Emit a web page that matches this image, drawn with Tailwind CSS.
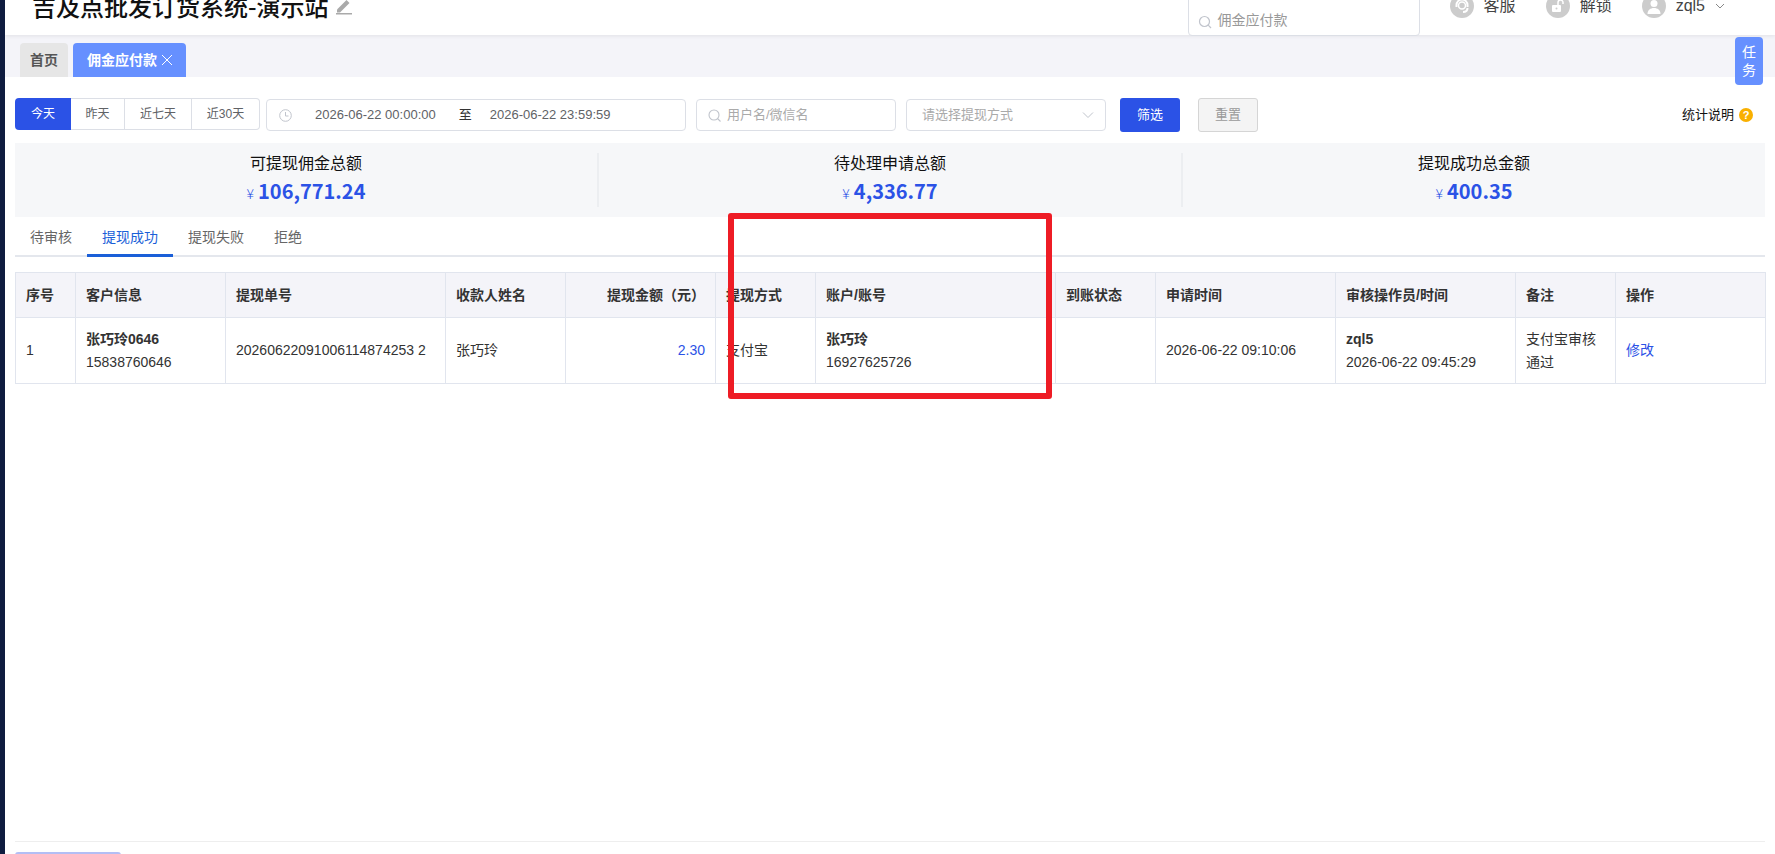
<!DOCTYPE html>
<html lang="zh-CN">
<head>
<meta charset="utf-8">
<title>佣金应付款</title>
<script src="https://cdn.jsdelivr.net/npm/@tailwindcss/browser@4"></script>
</head>
<body class="bg-white">
<div class="relative flex h-[854px] w-[1775px] overflow-hidden bg-white font-['Liberation_Sans','Noto_Sans_CJK_SC',sans-serif] text-[14px] text-[#333]">
  <aside class="w-[5px] shrink-0 bg-[#0f1c3f]"></aside>
  <main class="flex min-w-0 flex-1 flex-col overflow-hidden">
    <header class="relative z-10 -mt-[23px] flex h-[58px] shrink-0 items-center bg-white pl-[27px] pr-[50px] shadow-[0_1px_4px_rgba(0,0,0,0.08)]">
      <h1 class="font-['Noto_Sans_CJK_SC',sans-serif] text-[24px] font-medium whitespace-nowrap text-[#111]">吉及点批发订货系统-演示站</h1>
      <svg class="ml-[6px] h-[18px] w-[18px] self-center" viewBox="0 0 18 18" fill="#aaa"><path d="M2 12.5 11.5 3l3 3L5 15.5H2z"/><rect x="1" y="16" width="16" height="1.5"/></svg>
      <div class="ml-auto flex h-[60px] w-[232px] items-end rounded-[4px] border border-[#dcdfe6] pb-[4px] pl-[9px] text-[14px] text-[#999]">
        <svg class="mr-[6px] mb-[2px] h-[14px] w-[14px]" viewBox="0 0 14 14" fill="none" stroke="#c0c4cc" stroke-width="1.2"><circle cx="6.5" cy="6.5" r="5"/><path d="m10.2 10.2 2.8 2.8"/></svg>
        <span>佣金应付款</span>
      </div>
      <div class="ml-[30px] flex items-center gap-[10px]">
        <span class="flex h-[24px] w-[24px] items-center justify-center rounded-full bg-[#ccc]"><svg class="h-[18px] w-[18px]" viewBox="0 0 18 18" fill="none" stroke="#fff" stroke-width="2"><path d="M3.5 10V8a5.5 5.5 0 0 1 11 0v2"/><path d="M14.500 11c0 2.500-2 4-4.500 4"/><circle cx="9" cy="8.500" r="3.500" stroke-width="1.500"/></svg></span>
        <span class="text-[16px] text-[#444]">客服</span>
      </div>
      <div class="ml-[30px] flex items-center gap-[10px]">
        <span class="flex h-[24px] w-[24px] items-center justify-center rounded-full bg-[#ccc]"><svg class="h-[16px] w-[16px]" viewBox="0 0 16 16"><rect x="2" y="7" width="9" height="7" rx="1" fill="#fff"/><path d="M8 7V4.500a2.500 2.500 0 0 1 5 0V6" fill="none" stroke="#fff" stroke-width="1.500"/><circle cx="6.500" cy="10.500" r="1" fill="#ccc"/></svg></span>
        <span class="text-[16px] text-[#444]">解锁</span>
      </div>
      <div class="ml-[30px] flex items-center gap-[10px]">
        <span class="flex h-[24px] w-[24px] items-center justify-center rounded-full bg-[#ccc]"><svg class="h-[18px] w-[18px]" viewBox="0 0 18 18" fill="#fff"><circle cx="9" cy="6.500" r="3.500"/><path d="M2.500 17c0-4 3-6 6.500-6s6.500 2 6.500 6z"/></svg></span>
        <span class="text-[16px] text-[#444]">zql5</span>
        <svg class="h-[8px] w-[10px]" viewBox="0 0 10 8" fill="none" stroke="#888" stroke-width="1"><path d="m1 2 4 4 4-4"/></svg>
      </div>
    </header>

    <nav class="flex h-[42px] shrink-0 items-end gap-[5px] bg-[#f4f4f9] pl-[15px]">
      <span class="flex h-[34px] w-[48px] items-center justify-center rounded-t-[4px] bg-[#e6e6e6] font-bold text-[#555]">首页</span>
      <span class="flex h-[34px] w-[113px] items-center justify-center gap-[5px] rounded-t-[4px] bg-[#6690ff] font-bold text-white">佣金应付款
        <svg class="h-[10px] w-[10px]" viewBox="0 0 10 10" stroke="#fff" stroke-width="1"><path d="m0 0 10 10M10 0 0 10"/></svg>
      </span>
    </nav>

    <section class="flex min-h-0 flex-1 flex-col px-[10px]">
      <div class="mt-[21px] flex h-[34px] items-start text-[13px]">
        <div class="flex h-[32px] text-[12px] text-[#606266]">
          <span class="flex w-[56px] items-center justify-center rounded-l-[4px] bg-[#2b52e6] text-white">今天</span>
          <span class="flex w-[54px] items-center justify-center border-y border-r border-[#dcdfe6]">昨天</span>
          <span class="flex w-[67px] items-center justify-center border-y border-r border-[#dcdfe6]">近七天</span>
          <span class="flex w-[68px] items-center justify-center rounded-r-[4px] border-y border-r border-[#dcdfe6]">近30天</span>
        </div>
        <div class="mt-[1px] ml-[6px] flex h-[32px] w-[420px] items-center rounded-[4px] border border-[#dcdfe6] pl-[12px] text-[#606266]">
          <svg class="h-[13px] w-[13px]" viewBox="0 0 13 13" fill="none" stroke="#c0c4cc" stroke-width="1"><circle cx="6.500" cy="6.500" r="5.800"/><path d="M6.500 3v4h3"/></svg>
          <span class="ml-[23px] whitespace-nowrap">2026-06-22 00:00:00</span>
          <span class="ml-[23px] text-[#333]">至</span>
          <span class="ml-[18px] whitespace-nowrap">2026-06-22 23:59:59</span>
        </div>
        <div class="mt-[1px] ml-[10px] flex h-[32px] w-[200px] items-center rounded-[4px] border border-[#dcdfe6] pl-[11px] text-[#aaa]">
          <svg class="h-[13px] w-[13px]" viewBox="0 0 13 13" fill="none" stroke="#c0c4cc" stroke-width="1.100"><circle cx="6" cy="6" r="5"/><path d="m9.500 9.500 3 3"/></svg>
          <span class="ml-[6px]">用户名/微信名</span>
        </div>
        <div class="mt-[1px] ml-[10px] flex h-[32px] w-[200px] items-center justify-between rounded-[4px] border border-[#dcdfe6] pr-[11px] pl-[15px] text-[#aaa]">
          <span>请选择提现方式</span>
          <svg class="h-[8px] w-[12px]" viewBox="0 0 12 8" fill="none" stroke="#c0c4cc" stroke-width="1"><path d="m1 1.500 5 5 5-5"/></svg>
        </div>
        <span class="ml-[14px] flex h-[34px] w-[60px] items-center justify-center rounded-[3px] bg-[#2b52e6] text-white">筛选</span>
        <span class="ml-[18px] flex h-[34px] w-[60px] items-center justify-center rounded-[3px] border border-[#d5d5d5] bg-[#f4f4f4] text-[#999]">重置</span>
        <div class="mt-[7px] ml-auto flex items-center gap-[5px] pr-[12px] text-[14px] text-[#111]">
          <span class="text-[13px]">统计说明</span>
          <span class="flex h-[14px] w-[14px] items-center justify-center rounded-full bg-[#f9b000] text-[11px] font-bold text-white">?</span>
        </div>
      </div>

      <div class="mt-[11px] flex h-[74px] bg-[#f6f7f9] py-[10px]">
        <div class="flex flex-1 flex-col items-center justify-center border-r-2 border-[#eceef1]">
          <span class="text-[16px] leading-[22px] text-[#111]">可提现佣金总额</span>
          <span class="mt-[1px] flex items-baseline font-['Noto_Sans_CJK_SC',sans-serif] leading-[30px] text-[#2b52e6]"><span class="text-[14px] font-light">¥</span><span class="ml-[4px] text-[20px] font-bold">106,771.24</span></span>
        </div>
        <div class="flex flex-1 flex-col items-center justify-center border-r-2 border-[#eceef1]">
          <span class="text-[16px] leading-[22px] text-[#111]">待处理申请总额</span>
          <span class="mt-[1px] flex items-baseline font-['Noto_Sans_CJK_SC',sans-serif] leading-[30px] text-[#2b52e6]"><span class="text-[14px] font-light">¥</span><span class="ml-[4px] text-[20px] font-bold">4,336.77</span></span>
        </div>
        <div class="flex flex-1 flex-col items-center justify-center">
          <span class="text-[16px] leading-[22px] text-[#111]">提现成功总金额</span>
          <span class="mt-[1px] flex items-baseline font-['Noto_Sans_CJK_SC',sans-serif] leading-[30px] text-[#2b52e6]"><span class="text-[14px] font-light">¥</span><span class="ml-[4px] text-[20px] font-bold">400.35</span></span>
        </div>
      </div>

      <div class="flex h-[40px] border-b-2 border-[#e4e7ed] text-[#666]">
        <span class="px-[15px] pt-[10px]">待审核</span>
        <span class="-mb-[2px] border-b-[3px] border-[#1a5fd8] px-[15px] pt-[10px] text-[#1a5fd8]">提现成功</span>
        <span class="px-[15px] pt-[10px]">提现失败</span>
        <span class="px-[15px] pt-[10px]">拒绝</span>
      </div>

      <table class="mt-[15px] w-[1750px] table-fixed border-collapse text-left text-[14px] text-[#333]">
        <colgroup>
          <col class="w-[60px]"><col class="w-[150px]"><col class="w-[220px]"><col class="w-[120px]"><col class="w-[150px]"><col class="w-[100px]"><col class="w-[240px]"><col class="w-[100px]"><col class="w-[180px]"><col class="w-[180px]"><col class="w-[100px]"><col class="w-[150px]">
        </colgroup>
        <thead>
          <tr class="h-[45px] bg-[#f4f4f9] font-bold">
            <th class="border border-[#e1e5ee] px-[10px]">序号</th>
            <th class="border border-[#e1e5ee] px-[10px]">客户信息</th>
            <th class="border border-[#e1e5ee] px-[10px]">提现单号</th>
            <th class="border border-[#e1e5ee] px-[10px]">收款人姓名</th>
            <th class="border border-[#e1e5ee] px-[10px] text-right">提现金额（元）</th>
            <th class="border border-[#e1e5ee] px-[10px]">提现方式</th>
            <th class="border border-[#e1e5ee] px-[10px]">账户/账号</th>
            <th class="border border-[#e1e5ee] px-[10px]">到账状态</th>
            <th class="border border-[#e1e5ee] px-[10px]">申请时间</th>
            <th class="border border-[#e1e5ee] px-[10px]">审核操作员/时间</th>
            <th class="border border-[#e1e5ee] px-[10px]">备注</th>
            <th class="border border-[#e1e5ee] px-[10px]">操作</th>
          </tr>
        </thead>
        <tbody>
          <tr class="h-[66px] leading-[23px]">
            <td class="border border-[#e1e5ee] px-[10px]">1</td>
            <td class="border border-[#e1e5ee] px-[10px]"><div class="font-bold">张巧玲0646</div><div>15838760646</div></td>
            <td class="border border-[#e1e5ee] px-[10px]">20260622091006114874253 2</td>
            <td class="border border-[#e1e5ee] px-[10px]">张巧玲</td>
            <td class="border border-[#e1e5ee] px-[10px] text-right text-[#2b52e6]">2.30</td>
            <td class="border border-[#e1e5ee] px-[10px]">支付宝</td>
            <td class="border border-[#e1e5ee] px-[10px]"><div class="font-bold">张巧玲</div><div>16927625726</div></td>
            <td class="border border-[#e1e5ee] px-[10px]"></td>
            <td class="border border-[#e1e5ee] px-[10px]">2026-06-22 09:10:06</td>
            <td class="border border-[#e1e5ee] px-[10px]"><div class="font-bold">zql5</div><div>2026-06-22 09:45:29</div></td>
            <td class="border border-[#e1e5ee] px-[10px]">支付宝审核通过</td>
            <td class="border border-[#e1e5ee] px-[10px] text-[#2b52e6]">修改</td>
          </tr>
        </tbody>
      </table>

      <div class="mt-auto h-[13px] border-t border-[#eee]">
        <div class="mt-[10px] h-[4px] w-[106px] rounded-t-[3px] border-t-2 border-[#b3bef5] bg-white"></div>
      </div>
    </section>
  </main>

  <div class="absolute top-[37px] left-[1735px] z-20 flex h-[48px] w-[28px] flex-col items-center justify-center rounded-[4px] bg-[#6690ff] text-[14px] leading-[18px] text-white"><span>任</span><span>务</span></div>
  <div class="pointer-events-none absolute top-[213px] left-[728px] z-20 h-[186px] w-[324px] rounded-[3px] border-[6px] border-[#ee1c25]"></div>
</div>
</body>
</html>
